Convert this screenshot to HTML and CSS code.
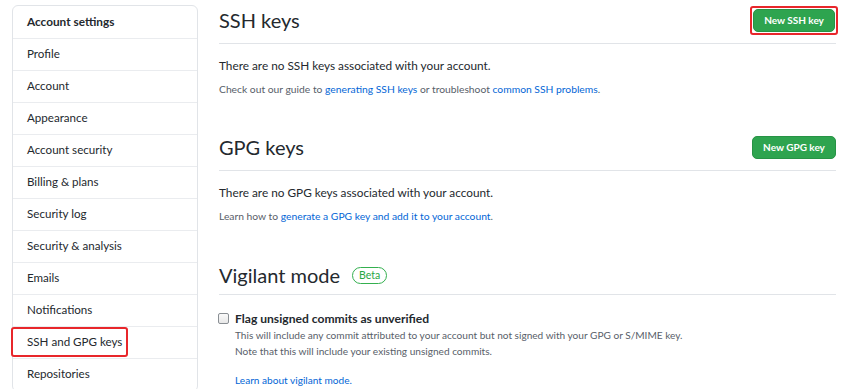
FILE: index.html
```html
<!DOCTYPE html>
<html>
<head>
<meta charset="utf-8">
<link rel="stylesheet" href="styles.css">
</head>
<body>
<div class="page">
  <nav class="menu">
    <div class="menu-heading">Account settings</div>
    <a class="menu-item">Profile</a>
    <a class="menu-item">Account</a>
    <a class="menu-item">Appearance</a>
    <a class="menu-item">Account security</a>
    <a class="menu-item">Billing &amp; plans</a>
    <a class="menu-item">Security log</a>
    <a class="menu-item">Security &amp; analysis</a>
    <a class="menu-item">Emails</a>
    <a class="menu-item">Notifications</a>
    <a class="menu-item selected"><span class="hl-item">SSH and GPG keys</span></a>
    <a class="menu-item">Repositories</a>
  </nav>
  <main class="content">
    <section class="section">
      <div class="subhead">
        <h2 class="subhead-title">SSH keys</h2>
        <span class="hl-btn"><button class="btn-primary">New SSH key</button></span>
      </div>
      <p class="blank">There are no SSH keys associated with your account.</p>
      <p class="note">Check out our guide to <a class="link">generating SSH keys</a> or troubleshoot <a class="link">common SSH problems</a>.</p>
    </section>
    <section class="section gpg">
      <div class="subhead">
        <h2 class="subhead-title">GPG keys</h2>
        <button class="btn-primary">New GPG key</button>
      </div>
      <p class="blank">There are no GPG keys associated with your account.</p>
      <p class="note">Learn how to <a class="link">generate a GPG key and add it to your account</a>.</p>
    </section>
    <section class="section vigilant">
      <div class="subhead">
        <h2 class="subhead-title">Vigilant mode <span class="label-beta">Beta</span></h2>
      </div>
      <div class="check-row">
        <span class="checkbox"></span>
        <div class="check-body">
          <div class="check-label">Flag unsigned commits as unverified</div>
          <div class="check-note">This will include any commit attributed to your account but not signed with your GPG or S/MIME key.<br>Note that this will include your existing unsigned commits.</div>
          <a class="link check-link">Learn about vigilant mode.</a>
        </div>
      </div>
    </section>
  </main>
</div>
</body>
</html>
```

FILE: styles.css
```css
* { box-sizing: border-box; }
html, body { margin: 0; padding: 0; background: #fff; }
body {
  font-family: Lato, "Liberation Sans", Arial, sans-serif;
  color: #24292e;
  font-size: 12px;
  width: 852px;
  height: 389px;
  overflow: hidden;
}
.page {
  display: flex;
  align-items: flex-start;
  padding: 5px 16px 0 12px;
  gap: 21px;
}
.menu {
  width: 186px;
  flex: none;
  border: 1px solid #e1e4e8;
  border-radius: 6px;
  display: flex;
  flex-direction: column;
}
.menu-heading {
  height: 33px;
  line-height: 32px;
  padding: 0 14px;
  font-size: 11.8px;
  font-weight: bold;
  color: #24292e;
  border-bottom: 1px solid #eaecef;
}
.menu-item {
  height: 32px;
  line-height: 30px;
  padding: 0 14px;
  font-size: 11.6px;
  color: #24292e;
  border-bottom: 1px solid #eaecef;
  position: relative;
}
.menu-item:last-child { border-bottom: none; }
.hl-item { position: relative; }
.hl-item::after {
  content: "";
  position: absolute;
  left: -16px;
  right: -6px;
  top: -8px;
  bottom: -9px;
  border: 2px solid #e8262b;
  border-radius: 3px;
}
.content {
  flex: 1;
  min-width: 0;
}
.subhead {
  display: flex;
  align-items: center;
  justify-content: space-between;
  border-bottom: 1px solid #e1e4e8;
  height: 39px;
  padding-bottom: 8px;
}
.subhead-title {
  margin: 0;
  font-size: 20px;
  font-weight: normal;
  line-height: 30px;
  color: #24292e;
  display: flex;
  align-items: center;
}
.btn-primary {
  font-family: inherit;
  font-size: 10px;
  font-weight: bold;
  color: #fff;
  background: #2ea44f;
  border: 1px solid #279345;
  border-radius: 5px;
  height: 23px;
  padding: 0;
  line-height: 21px;
  display: block;
}
.hl-btn {
  display: block;
  border: 2px solid #e8262b;
  border-radius: 3px;
  padding: 1px;
  margin-right: -2px;
}
.hl-btn .btn-primary { width: 82px; }
.gpg .btn-primary { width: 84px; }
.blank {
  margin: 11px 0 0;
  font-size: 11.8px;
  line-height: 21px;
}
.note {
  margin: 5px 0 0;
  font-size: 10.3px;
  line-height: 16px;
  color: #586069;
}
.link { color: #0366d6; text-decoration: none; }
.gpg { margin-top: 35px; }
.vigilant { margin-top: 36px; }
.vigilant .subhead { height: 35px; padding-bottom: 4px; }
.label-beta {
  display: inline-block;
  margin-left: 12px;
  font-size: 10.5px;
  line-height: 15px;
  padding: 0 6px;
  color: #28a745;
  border: 1px solid #34b04f;
  border-radius: 10px;
}
.check-row {
  display: flex;
  gap: 6px;
  margin-top: 16px;
}
.checkbox {
  width: 11px;
  height: 11px;
  margin-top: 2px;
  margin-left: -1px;
  border: 1px solid #8a8f94;
  border-radius: 2px;
  background: linear-gradient(#fafafa, #e8e8e8);
  flex: none;
}
.check-label {
  font-size: 12.1px;
  font-weight: bold;
  line-height: 15px;
}
.check-note {
  font-size: 10.1px;
  line-height: 16px;
  color: #586069;
  margin-top: 1px;
}
.check-link {
  display: block;
  font-size: 10.1px;
  line-height: 16px;
  margin-top: 13px;
}
```
